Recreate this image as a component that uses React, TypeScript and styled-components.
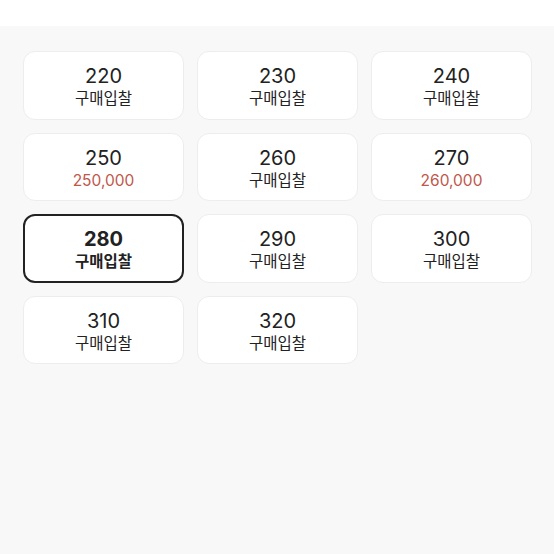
import React from "react";
import styled, { createGlobalStyle } from "styled-components";

const Global = createGlobalStyle`
  html, body { margin: 0; padding: 0; background: #f8f8f8; }
  body { font-family: Inter, "Noto Sans CJK KR", "Noto Sans", sans-serif; }
`;

const Page = styled.div`
  width: 554px;
  min-height: 554px;
  background: #f8f8f8;
  display: flex;
  flex-direction: column;
`;

const TopBar = styled.div`
  height: 26px;
  background: #ffffff;
`;

const Grid = styled.div`
  display: grid;
  grid-template-columns: repeat(3, 161px);
  column-gap: 13px;
  row-gap: 13px;
  padding: 25px 23px 0 23px;
`;

const Card = styled.button<{ $selected?: boolean }>`
  box-sizing: border-box;
  height: 68.5px;
  background: #ffffff;
  border: ${(p) => (p.$selected ? "2px solid #222222" : "1px solid #ededed")};
  border-radius: 12px;
  display: flex;
  flex-direction: column;
  align-items: center;
  justify-content: center;
  padding: 3px 0 0 0;
  font-family: inherit;
  cursor: pointer;
`;

const Size = styled.div<{ $selected?: boolean }>`
  font-size: 20px;
  line-height: 24px;
  color: #222222;
  font-weight: ${(p) => (p.$selected ? 700 : 400)};
`;

const Label = styled.div<{ $price?: boolean; $selected?: boolean }>`
  font-size: 15.5px;
  line-height: 21px;
  color: ${(p) => (p.$price ? "#c0574a" : "#222222")};
  font-weight: ${(p) => (p.$selected ? 700 : 400)};
`;

const items: { size: string; price?: string }[] = [
  { size: "220" },
  { size: "230" },
  { size: "240" },
  { size: "250", price: "250,000" },
  { size: "260" },
  { size: "270", price: "260,000" },
  { size: "280" },
  { size: "290" },
  { size: "300" },
  { size: "310" },
  { size: "320" },
];

export default function App() {
  return (
    <Page>
      <Global />
      <TopBar />
      <Grid>
        {items.map((it) => {
          const sel = it.size === "280";
          return (
            <Card key={it.size} $selected={sel}>
              <Size $selected={sel}>{it.size}</Size>
              <Label $price={!!it.price} $selected={sel}>
                {it.price ?? "구매입찰"}
              </Label>
            </Card>
          );
        })}
      </Grid>
    </Page>
  );
}
